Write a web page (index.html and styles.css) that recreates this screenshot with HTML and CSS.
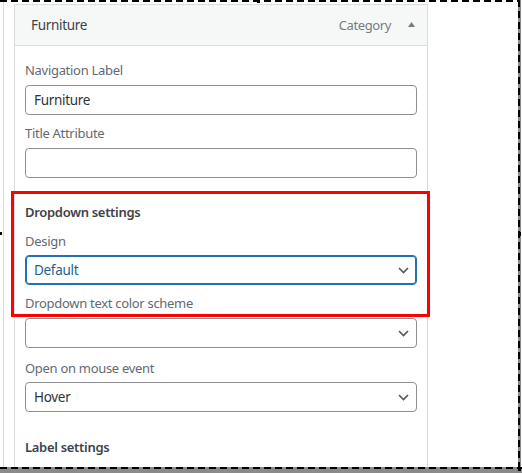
FILE: index.html
```html
<!DOCTYPE html>
<html lang="en">
<head>
<meta charset="utf-8">
<title>Menu item settings</title>
<link rel="stylesheet" href="styles.css">
</head>
<body>
<div class="screen">
  <div class="gutter"></div>
  <div class="panel">
    <div class="panel-head">
      <span class="item-title">Furniture</span>
      <span class="item-controls">
        <span class="item-type">Category</span>
        <svg class="toggle" width="7" height="5" viewBox="0 0 7 5"><path d="M3.5 0 L7 5 L0 5 Z" fill="#787c82"/></svg>
      </span>
    </div>
    <div class="panel-body">
      <div class="field">
        <label class="label">Navigation Label</label>
        <div class="input">Furniture</div>
      </div>
      <div class="field">
        <label class="label">Title Attribute</label>
        <div class="input"></div>
      </div>
      <div class="section-title first">Dropdown settings</div>
      <div class="field tight">
        <label class="label">Design</label>
        <div class="input select focused">Default
          <svg class="chev" width="11" height="7" viewBox="0 0 11 7"><path d="M1 1 L5.5 5.5 L10 1" fill="none" stroke="#50575e" stroke-width="1.6"/></svg>
        </div>
      </div>
      <div class="field">
        <label class="label">Dropdown text color scheme</label>
        <div class="input select">
          <svg class="chev" width="11" height="7" viewBox="0 0 11 7"><path d="M1 1 L5.5 5.5 L10 1" fill="none" stroke="#50575e" stroke-width="1.6"/></svg>
        </div>
      </div>
      <div class="field tight wide">
        <label class="label">Open on mouse event</label>
        <div class="input select">Hover
          <svg class="chev" width="11" height="7" viewBox="0 0 11 7"><path d="M1 1 L5.5 5.5 L10 1" fill="none" stroke="#50575e" stroke-width="1.6"/></svg>
        </div>
      </div>
      <div class="section-title">Label settings</div>
    </div>
  </div>

  <div class="highlight"></div>

  <div class="edge-top"></div>
  <div class="edge-right"></div>
  <div class="edge-bottom"></div>
  <div class="handle h-top"></div>
  <div class="handle h-left"></div>
  <div class="handle h-right"></div>
  <div class="handle h-br"></div>
</div>
</body>
</html>
```
FILE: styles.css
```css
html, body {
  margin: 0;
  padding: 0;
  background: #fff;
}

.screen {
  position: relative;
  width: 522px;
  height: 473px;
  overflow: hidden;
  display: flex;
  align-items: flex-start;
  font-family: "Noto Sans", "Open Sans", sans-serif;
  font-size: 13px;
  color: #3c434a;
}

.gutter {
  width: 1px;
  height: 473px;
  margin-left: 3px;
  background: #dcdcde;
  flex: none;
}

.panel {
  margin-left: 10px;
  margin-top: 4px;
  width: 414px;
  height: 480px;
  box-sizing: border-box;
  border: 1px solid #dcdcde;
  border-bottom: none;
  flex: none;
}

.panel-head {
  height: 40px;
  background: #f6f7f7;
  border-bottom: 1px solid #dcdcde;
  display: flex;
  align-items: center;
  justify-content: space-between;
  padding: 0 12px 0 16px;
}

.item-title {
  font-size: 13.5px;
  color: #3c434a;
  letter-spacing: -0.3px;
}

.item-controls {
  display: flex;
  align-items: center;
  gap: 17px;
}

.item-type {
  font-size: 13px;
  color: #787c82;
  letter-spacing: -0.4px;
}

.toggle {
  display: block;
  margin-top: -2px;
}

.panel-body {
  padding: 15px 10px 0 10px;
}

.field {
  margin-top: 9px;
}
.field:first-child {
  margin-top: 0;
}
.field.tight .label {
  margin-bottom: 5px;
}
.field.wide {
  margin-top: 11px;
}

.label {
  display: block;
  height: 18px;
  line-height: 18px;
  margin-bottom: 6px;
  color: #646970;
  letter-spacing: -0.3px;
}

.input {
  position: relative;
  height: 30px;
  box-sizing: border-box;
  border: 1px solid #8c8f94;
  border-radius: 4px;
  padding: 0 8px;
  line-height: 28px;
  font-size: 13.5px;
  color: #2c3338;
  letter-spacing: -0.3px;
}

.select.focused {
  border-color: #2271b1;
  box-shadow: inset 0 0 0 1px #2271b1;
  color: #1d5f94;
}

.chev {
  position: absolute;
  right: 7px;
  top: 11px;
}

.section-title {
  margin-top: 26px;
  height: 18px;
  line-height: 18px;
  font-weight: 600;
  color: #3c434a;
  letter-spacing: -0.3px;
}
.section-title.first {
  margin-top: 25px;
  margin-bottom: 11px;
}

/* annotation overlay */
.highlight {
  position: absolute;
  left: 11px;
  top: 191px;
  width: 419px;
  height: 126px;
  box-sizing: border-box;
  border: 3px solid #ff0000;
}

/* screenshot selection frame */
.edge-top {
  position: absolute;
  left: 0;
  top: 0;
  width: 520px;
  height: 2px;
  background: repeating-linear-gradient(to right, #000 0 7px, #fff 7px 11px);
}
.edge-right {
  position: absolute;
  left: 518px;
  top: 0;
  width: 3px;
  height: 473px;
  background:
    repeating-linear-gradient(to bottom, #000 0 7px, transparent 7px 11px) left / 2px 100% no-repeat,
    #8a8a8a;
}
.edge-bottom {
  position: absolute;
  left: 0;
  top: 467px;
  width: 522px;
  height: 6px;
  background:
    repeating-linear-gradient(to right, #000 0 7px, transparent 7px 11px) top / 100% 2px no-repeat,
    #8a8a8a;
}
.handle {
  position: absolute;
  width: 3px;
  height: 3px;
  background: #000;
}
.h-top { left: 257px; top: 0; }
.h-left { left: 0; top: 232px; width: 2px; }
.h-right { left: 518px; top: 232px; height: 4px; }
.h-br { left: 518px; top: 467px; height: 4px; }
```
